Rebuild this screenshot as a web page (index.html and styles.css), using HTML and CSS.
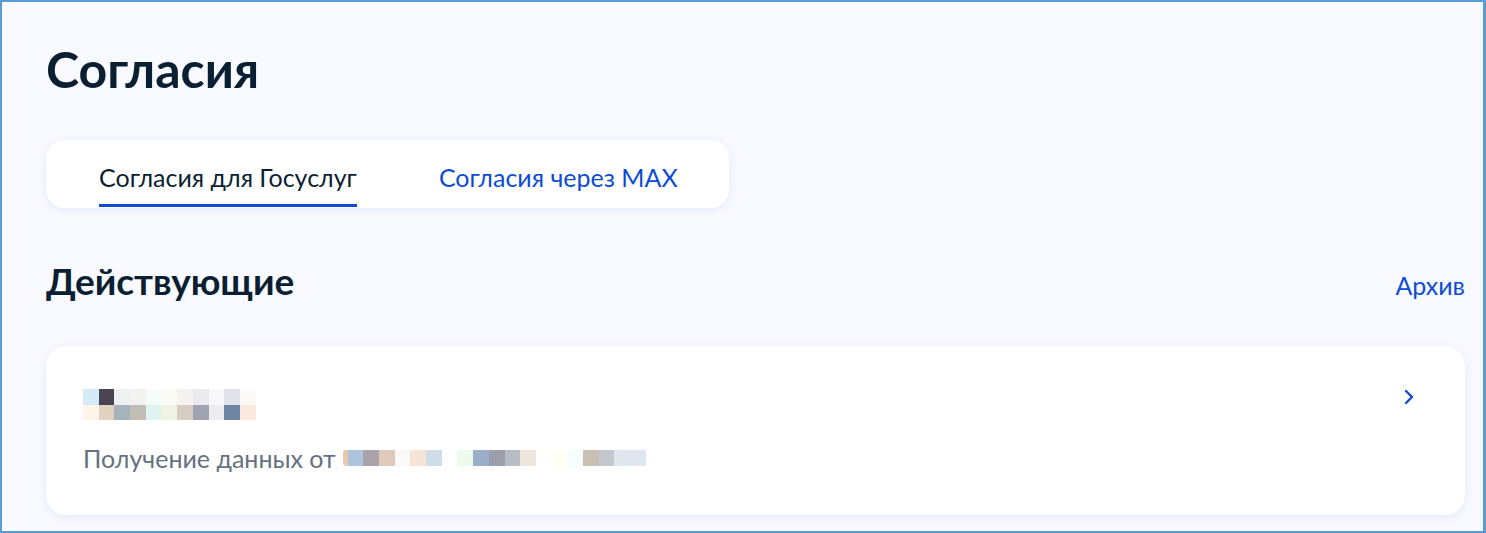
FILE: index.html
```html
<!DOCTYPE html>
<html lang="ru">
<head>
<meta charset="utf-8">
<link rel="stylesheet" href="styles.css">
</head>
<body>
<div class="frame">
  <h1 class="title">Согласия</h1>
  <div class="tabs">
    <div class="tab active">Согласия для Госуслуг</div>
    <div class="tab">Согласия через MAX</div>
  </div>
  <div class="section-head">
    <h2 class="section-title">Действующие</h2>
    <a class="archive">Архив</a>
  </div>
  <div class="card">
    <div class="card-body">
      <div class="pix">
        <div class="pix-row">
          <i style="background:#d3ecf8"></i><i style="background:#4a4453"></i><i style="background:#eff0f2"></i><i style="background:#f2f2f0"></i><i style="background:#f5fbf8"></i><i style="background:#f8faf3"></i><i style="background:#f5f2f0"></i><i style="background:#ebebef"></i><i style="background:#f8f8fa"></i><i style="background:#e0e4ea"></i><i style="background:#fff9f5"></i>
        </div>
        <div class="pix-row">
          <i style="background:#fff5e9"></i><i style="background:#e4d2c1"></i><i style="background:#a5b3bb"></i><i style="background:#c1beb4"></i><i style="background:#dff3f1"></i><i style="background:#eff3e3"></i><i style="background:#d7cdc3"></i><i style="background:#a0a3b3"></i><i style="background:#ededf0"></i><i style="background:#6e84a3"></i><i style="background:#fbe9df"></i>
        </div>
      </div>
      <div class="desc">
        <span>Получение данных от</span>
        <span class="pix-line"><b class="edge"></b><i style="background:#adc4de"></i><i style="background:#aaa2ab"></i><i style="background:#dfc9bb"></i><i style="background:#fbf9f7"></i><i style="background:#f6e4d5"></i><i style="background:#cfdce9"></i><i style="background:#ffffff"></i><i style="background:#eefaee"></i><i style="background:#9aafc9"></i><i style="background:#9b9fab"></i><i style="background:#b8bcc5"></i><i style="background:#eee5dc"></i><i style="background:#ffffff"></i><i style="background:#fffef2"></i><i style="background:#f5fdfd"></i><i style="background:#cabfb5"></i><i style="background:#c3c7ce"></i><i style="background:#dfe6ee"></i><i style="background:#dfe6ee"></i></span>
      </div>
    </div>
    <svg class="chevron" width="12" height="16" viewBox="0 0 12 16"><path d="M3 2 L9 8 L3 14" fill="none" stroke="#0d4cd3" stroke-width="2.4" stroke-linecap="round" stroke-linejoin="round"/></svg>
  </div>
</div>
</body>
</html>
```

FILE: styles.css
```css
* { box-sizing: border-box; }
html, body { margin: 0; padding: 0; }
body {
  font-family: Lato, "Noto Sans", sans-serif;
  color: #0b1f33;
}
.frame {
  width: 1486px;
  height: 533px;
  border: 2px solid #5b9bd5;
  border-right-width: 3px;
  background: #f8faff;
  padding: 0 18px 0 44px;
  overflow: hidden;
}
.title {
  margin: 0;
  padding-top: 37px;
  font-size: 50px;
  line-height: 60px;
  font-weight: 700;
  color: #0b1f33;
}
.tabs {
  display: inline-flex;
  margin-top: 41px;
  height: 68px;
  background: #fff;
  border-radius: 18px;
  box-shadow: 0 2px 10px rgba(180, 195, 225, 0.3);
  padding: 0 51px 0 53px;
  gap: 82px;
}
.tab {
  font-size: 25px;
  line-height: 30px;
  padding-top: 22px;
  color: #0d4cd3;
  position: relative;
}
.tab.active {
  color: #0b1f33;
}
.tab.active::after {
  content: "";
  position: absolute;
  left: 0;
  right: 0;
  bottom: 1px;
  height: 3px;
  background: #0d4cd3;
}
.section-head {
  display: flex;
  justify-content: space-between;
  align-items: baseline;
  margin-top: 51px;
}
.section-title {
  margin: 0;
  font-size: 37px;
  line-height: 44px;
  font-weight: 700;
}
.archive {
  font-size: 25px;
  color: #0d4cd3;
}
.card {
  margin-top: 43px;
  height: 169px;
  background: #fff;
  border-radius: 20px;
  box-shadow: 0 2px 10px rgba(180, 195, 225, 0.3);
  display: flex;
  justify-content: space-between;
  padding: 43px 50px 0 37px;
}
.pix-row { display: flex; height: 15.5px; }
.pix-row i, .pix-line i { display: block; width: 15.7px; height: 100%; }
.desc {
  margin-top: 23px;
  display: flex;
  align-items: center;
  gap: 7px;
  font-size: 25px;
  color: #66727f;
}
.pix-line { display: flex; height: 15.5px; align-items: stretch; }
.pix-line .edge { display: block; width: 5px; background: #ecc8ad; border-radius: 3px 0 0 3px; }
.chevron { margin-top: 0; }
```
